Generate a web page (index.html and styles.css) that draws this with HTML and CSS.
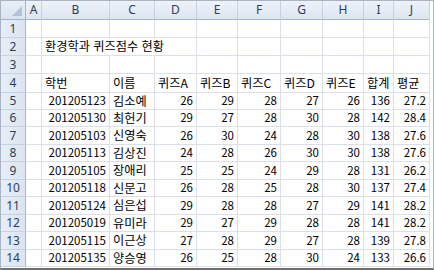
FILE: index.html
```html
<!DOCTYPE html>
<html lang="ko">
<head>
<meta charset="utf-8">
<link rel="stylesheet" href="styles.css">
</head>
<body>
<div class="frame">
<div class="sheet">
  <div class="corner"><span class="tri"></span></div>
  <div class="ch">A</div><div class="ch">B</div><div class="ch">C</div><div class="ch">D</div><div class="ch">E</div><div class="ch">F</div><div class="ch">G</div><div class="ch">H</div><div class="ch">I</div><div class="ch">J</div>

  <div class="rh">1</div><div class="c"></div><div class="c"></div><div class="c"></div><div class="c"></div><div class="c"></div><div class="c"></div><div class="c"></div><div class="c"></div><div class="c"></div><div class="c"></div>

  <div class="rh">2</div><div class="c"></div><div class="c k span3">환경학과 퀴즈점수 현황</div><div class="c"></div><div class="c"></div><div class="c"></div><div class="c"></div><div class="c"></div><div class="c"></div>

  <div class="rh">3</div><div class="c"></div><div class="c"></div><div class="c"></div><div class="c"></div><div class="c"></div><div class="c"></div><div class="c"></div><div class="c"></div><div class="c"></div><div class="c"></div>

  <div class="rh">4</div><div class="c"></div><div class="c k">학번</div><div class="c k">이름</div><div class="c k">퀴즈A</div><div class="c k">퀴즈B</div><div class="c k">퀴즈C</div><div class="c k">퀴즈D</div><div class="c k">퀴즈E</div><div class="c k">합계</div><div class="c k">평균</div>

  <div class="rh">5</div><div class="c"></div><div class="c n">201205123</div><div class="c k">김소예</div><div class="c n">26</div><div class="c n">29</div><div class="c n">28</div><div class="c n">27</div><div class="c n">26</div><div class="c n">136</div><div class="c n">27.2</div>

  <div class="rh">6</div><div class="c"></div><div class="c n">201205130</div><div class="c k">최헌기</div><div class="c n">29</div><div class="c n">27</div><div class="c n">28</div><div class="c n">30</div><div class="c n">28</div><div class="c n">142</div><div class="c n">28.4</div>

  <div class="rh">7</div><div class="c"></div><div class="c n">201205103</div><div class="c k">신영숙</div><div class="c n">26</div><div class="c n">30</div><div class="c n">24</div><div class="c n">28</div><div class="c n">30</div><div class="c n">138</div><div class="c n">27.6</div>

  <div class="rh">8</div><div class="c"></div><div class="c n">201205113</div><div class="c k">김상진</div><div class="c n">24</div><div class="c n">28</div><div class="c n">26</div><div class="c n">30</div><div class="c n">30</div><div class="c n">138</div><div class="c n">27.6</div>

  <div class="rh">9</div><div class="c"></div><div class="c n">201205105</div><div class="c k">장애리</div><div class="c n">25</div><div class="c n">25</div><div class="c n">24</div><div class="c n">29</div><div class="c n">28</div><div class="c n">131</div><div class="c n">26.2</div>

  <div class="rh">10</div><div class="c"></div><div class="c n">201205118</div><div class="c k">신문고</div><div class="c n">26</div><div class="c n">28</div><div class="c n">25</div><div class="c n">28</div><div class="c n">30</div><div class="c n">137</div><div class="c n">27.4</div>

  <div class="rh">11</div><div class="c"></div><div class="c n">201205124</div><div class="c k">심은섭</div><div class="c n">29</div><div class="c n">28</div><div class="c n">28</div><div class="c n">27</div><div class="c n">29</div><div class="c n">141</div><div class="c n">28.2</div>

  <div class="rh">12</div><div class="c"></div><div class="c n">201205019</div><div class="c k">유미라</div><div class="c n">29</div><div class="c n">27</div><div class="c n">29</div><div class="c n">28</div><div class="c n">28</div><div class="c n">141</div><div class="c n">28.2</div>

  <div class="rh">13</div><div class="c"></div><div class="c n">201205115</div><div class="c k">이근상</div><div class="c n">27</div><div class="c n">28</div><div class="c n">29</div><div class="c n">27</div><div class="c n">28</div><div class="c n">139</div><div class="c n">27.8</div>

  <div class="rh">14</div><div class="c"></div><div class="c n">201205135</div><div class="c k">양승영</div><div class="c n">26</div><div class="c n">25</div><div class="c n">28</div><div class="c n">30</div><div class="c n">24</div><div class="c n">133</div><div class="c n">26.6</div>
</div>
</div>
</body>
</html>
```
FILE: styles.css
```css
html, body {
  margin: 0;
  padding: 0;
  background: #ffffff;
}
.frame {
  width: 432px;
  height: 267px;
  border: 1px solid #a9b3c2;
  border-bottom: 2px solid #6f6f6f;
  overflow: hidden;
  background: #ffffff;
}
.sheet {
  display: grid;
  grid-template-columns: 25px 16px 68px 45px 42px 41px 43px 42px 41px 30px 36px;
  grid-template-rows: 19px 18px 18px 18px 19px 17px 17px 18px 17px 18px 17px 18px 17px 18px 17px;
  font-family: "Noto Sans CJK KR", "Malgun Gothic", sans-serif;
  font-size: 11.5px;
  color: #000;
}
.sheet > div {
  box-sizing: border-box;
  border-right: 1px solid #dadfe8;
  border-bottom: 1px solid #dadfe8;
  white-space: nowrap;
  display: flex;
  align-items: center;
  line-height: 1;
  overflow: visible;
}
.corner {
  background: linear-gradient(#e9eff8, #d9e3f0);
  position: relative;
  border-right: 1px solid #9eb6ce !important;
  border-bottom: 1px solid #9eb6ce !important;
}
.tri {
  position: absolute;
  right: 3px;
  bottom: 3px;
  width: 0;
  height: 0;
  border-left: 10px solid transparent;
  border-bottom: 10px solid #b5c2d3;
}
.sheet > .ch {
  background: linear-gradient(#eef3fa, #dce5f1);
  border-right: 1px solid #c5d2e2;
  border-bottom: 1px solid #9eb6ce;
  justify-content: center;
  color: #2c3e5c;
  font-size: 12px;
  font-family: "Noto Sans", "Noto Sans CJK KR", sans-serif;
}
.sheet > .rh {
  background: linear-gradient(90deg, #e7eef8, #dbe4f0);
  border-right: 1px solid #9eb6ce;
  border-bottom: 1px solid #c5d2e2;
  justify-content: center;
  color: #2c3e5c;
  font-size: 12px;
  font-family: "Noto Sans", "Noto Sans CJK KR", sans-serif;
}
.c {
  padding-left: 3px;
}
.k {
  font-size: 12.2px;
}
.n {
  justify-content: flex-end;
  padding-left: 0;
  padding-right: 3px;
}
.span3 {
  grid-column: span 3;
}
```
